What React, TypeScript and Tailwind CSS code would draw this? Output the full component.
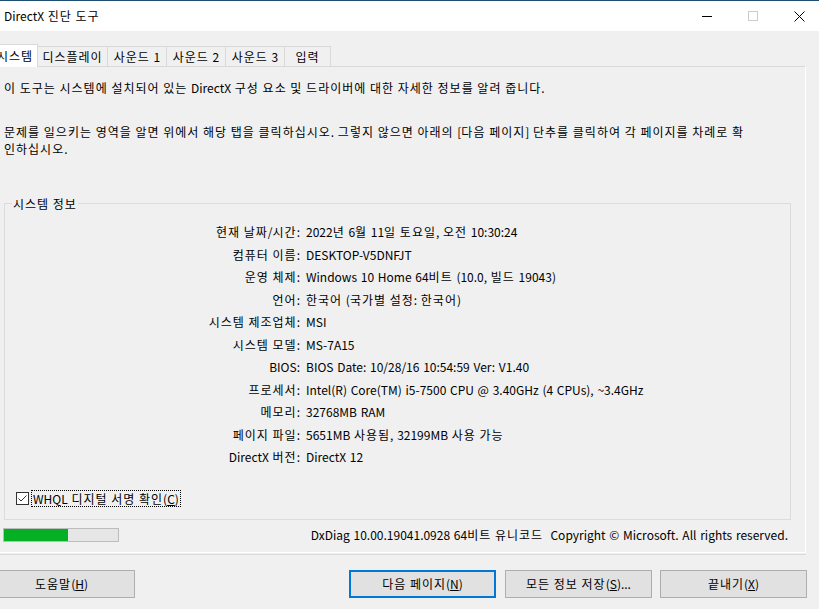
import React from "react";

const rows: [string, string][] = [
  ["현재 날짜/시간:", "2022년 6월 11일 토요일, 오전 10:30:24"],
  ["컴퓨터 이름:", "DESKTOP-V5DNFJT"],
  ["운영 체제:", "Windows 10 Home 64비트 (10.0, 빌드 19043)"],
  ["언어:", "한국어 (국가별 설정: 한국어)"],
  ["시스템 제조업체:", "MSI"],
  ["시스템 모델:", "MS-7A15"],
  ["BIOS:", "BIOS Date: 10/28/16 10:54:59 Ver: V1.40"],
  ["프로세서:", "Intel(R) Core(TM) i5-7500 CPU @ 3.40GHz (4 CPUs), ~3.4GHz"],
  ["메모리:", "32768MB RAM"],
  ["페이지 파일:", "5651MB 사용됨, 32199MB 사용 가능"],
  ["DirectX 버전:", "DirectX 12"],
];

const tabs: { label: string; w: string }[] = [
  { label: "디스플레이", w: "w-[70px]" },
  { label: "사운드 1", w: "w-[59px]" },
  { label: "사운드 2", w: "w-[59px]" },
  { label: "사운드 3", w: "w-[59px]" },
  { label: "입력", w: "w-[46px]" },
];

// Widen Hangul runs and spaces slightly to match Malgun Gothic metrics
function T({ text }: { text: string }) {
  const parts = text.split(/([\uAC00-\uD7A3 ]+)/);
  return (
    <>
      {parts.map((p, i) =>
        /[\uAC00-\uD7A3 ]/.test(p) && i % 2 === 1 ? (
          <span key={i} className="tracking-[1px] whitespace-pre">
            {p}
          </span>
        ) : (
          <React.Fragment key={i}>{p}</React.Fragment>
        )
      )}
    </>
  );
}

function Btn({ children, primary }: { children: React.ReactNode; primary?: boolean }) {
  return (
    <button
      className={
        "w-[147px] h-[28px] bg-[#e1e1e1] flex items-center justify-center text-[12px] text-black " +
        (primary ? "border-2 border-[#0078d7]" : "border border-[#adadad]")
      }
    >
      {children}
    </button>
  );
}

export default function App() {
  return (
    <div className="w-[819px] h-[609px] bg-[#f0f0f0] overflow-hidden flex flex-col text-[12px] text-black font-['Noto_Sans_CJK_KR',sans-serif]">
      {/* title bar */}
      <div className="h-[31px] shrink-0 bg-white border-t border-[#1d4d70] flex items-center">
        <span className="pl-[4px] text-[12px] leading-none">
          <T text="DirectX 진단 도구" />
        </span>
        <div className="ml-auto mr-[-3px] flex h-full">
          <div className="w-[46px] h-full flex items-center justify-center">
            <svg width="10" height="10" viewBox="0 0 10 10">
              <path d="M0 5.5H10" stroke="#000" strokeWidth="1" />
            </svg>
          </div>
          <div className="w-[46px] h-full flex items-center justify-center">
            <svg width="10" height="10" viewBox="0 0 10 10">
              <rect x="0.5" y="0.5" width="9" height="9" fill="none" stroke="#cccccc" strokeWidth="1" />
            </svg>
          </div>
          <div className="w-[46px] h-full flex items-center justify-center">
            <svg width="11" height="11" viewBox="0 0 11 11">
              <path d="M0.5 0.5L10.5 10.5M10.5 0.5L0.5 10.5" stroke="#000" strokeWidth="1" />
            </svg>
          </div>
        </div>
      </div>

      {/* tabs */}
      <div className="h-[35px] shrink-0 flex items-end ml-[-8px] relative z-10">
        <div className="w-[46px] h-[23px] bg-white border border-b-0 border-[#d9d9d9] flex items-center justify-center mb-[-1px]">
          <T text="시스템" />
        </div>
        {tabs.map((t) => (
          <div
            key={t.label}
            className={t.w + " h-[20px] border border-l-0 border-b-0 border-[#d9d9d9] flex items-center justify-center"}
          >
            <T text={t.label} />
          </div>
        ))}
      </div>

      {/* panel */}
      <div className="ml-[-2px] w-[808px] h-[487px] shrink-0 border-t border-l border-[#d9d9d9] border-r border-b border-r-white border-b-white flex flex-col pl-[5px] pr-[14px]">
        <p className="leading-[17px] mt-[12px] whitespace-nowrap">
          <T text="이 도구는 시스템에 설치되어 있는 DirectX 구성 요소 및 드라이버에 대한 자세한 정보를 알려 줍니다." />
        </p>
        <p className="leading-[17px] mt-[27px] whitespace-nowrap">
          <T text="문제를 일으키는 영역을 알면 위에서 해당 탭을 클릭하십시오. 그렇지 않으면 아래의 [다음 페이지] 단추를 클릭하여 각 페이지를 차례로 확" />
          <br />
          <T text="인하십시오." />
        </p>

        <fieldset className="mt-[38px] ml-[0px] w-[787px] border border-[#dcdcdc] pt-[9px] pb-[12px]">
          <legend className="ml-[7px] px-[1px] leading-[17px]">
            <T text="시스템 정보" />
          </legend>
          <div className="flex flex-col">
            {rows.map(([k, v]) => (
              <div key={k} className="flex h-[22.5px] items-center whitespace-nowrap">
                <span className="w-[295px] text-right">
                  <T text={k} />
                </span>
                <span className="pl-[6px]">
                  <T text={v} />
                </span>
              </div>
            ))}
          </div>
          <div className="flex items-center mt-[21px] ml-[11px] h-[17px]">
            <div className="w-[13px] h-[13px] border border-[#333333] bg-white flex items-center justify-center">
              <svg width="11" height="11" viewBox="0 0 11 11">
                <path d="M1.5 5.5L4 8L9.5 2.5" fill="none" stroke="#333" strokeWidth="1" />
              </svg>
            </div>
            <span className="ml-[2px] px-[1px] border border-dotted border-black leading-[15px]">
              <T text="WHQL 디지털 서명 확인" />(<span className="underline">C</span>)
            </span>
          </div>
        </fieldset>

        <div className="flex items-center justify-between mt-[8px] ml-[-1px] pr-[3px]">
          <div className="w-[116px] h-[14px] border border-[#bcbcbc] bg-[#e6e6e6]">
            <div className="h-full bg-[#06b025]" style={{ width: 64 }} />
          </div>
          <span className="leading-[17px] whitespace-nowrap mt-[-2px]">
            <T text="DxDiag 10.00.19041.0928 64비트 유니코드  Copyright © Microsoft. All rights reserved." />
          </span>
        </div>
      </div>
      <div className="ml-[-2px] w-[808px] h-[1px] mt-[1px] bg-[#dadada] shrink-0" />

      {/* buttons */}
      <div className="flex mt-[15px] ml-[-12px]">
        <Btn>
          <T text="도움말" />(<span className="underline">H</span>)
        </Btn>
        <div className="w-[214px]" />
        <Btn primary>
          <T text="다음 페이지" />(<span className="underline">N</span>)
        </Btn>
        <div className="w-[9px]" />
        <Btn>
          <T text="모든 정보 저장" />(<span className="underline">S</span>)...
        </Btn>
        <div className="w-[8px]" />
        <Btn>
          <T text="끝내기" />(<span className="underline">X</span>)
        </Btn>
      </div>
    </div>
  );
}
